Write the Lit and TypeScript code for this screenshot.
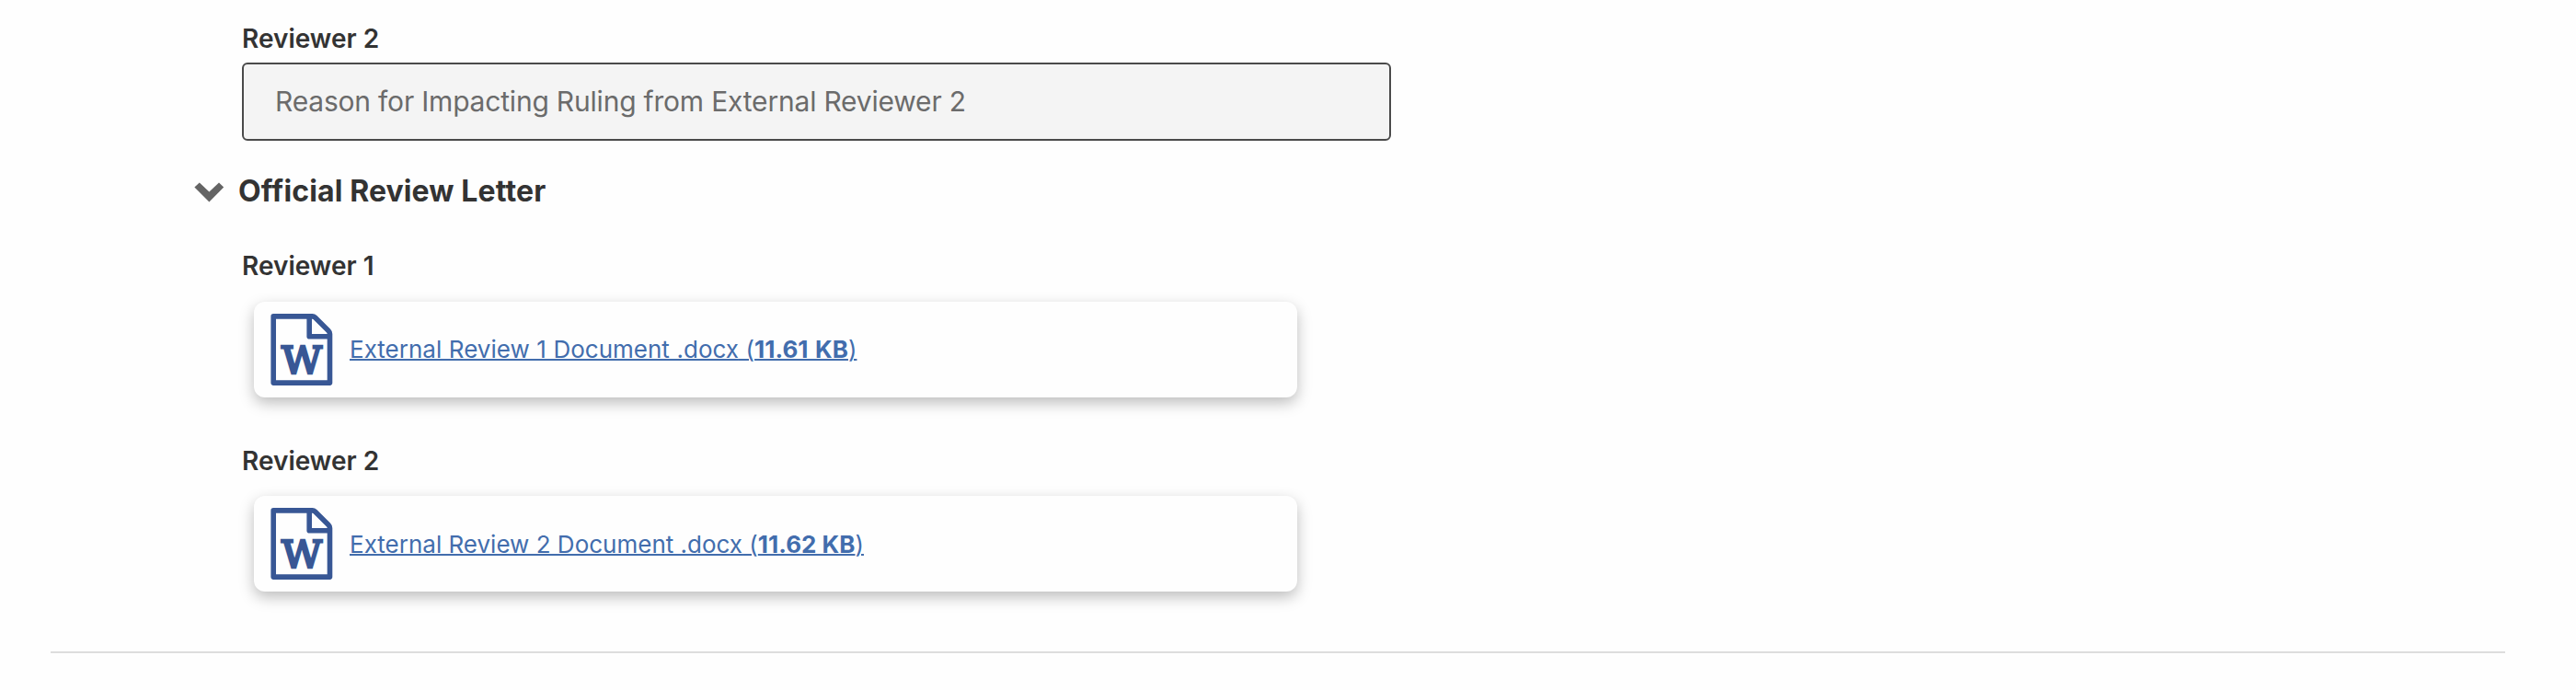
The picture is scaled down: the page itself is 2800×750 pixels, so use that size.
import { LitElement, html, css } from "lit";
import { customElement, property } from "lit/decorators.js";

@customElement("document-card")
class DocumentCard extends LitElement {
  @property() name = "";
  @property() size = "";

  static styles = css`
    :host {
      display: flex;
      align-items: center;
      box-sizing: border-box;
      width: 1134px;
      height: 104px;
      padding-left: 18px;
      gap: 18px;
      border-radius: 12px;
      background: #fefefe;
      box-shadow: 0 6px 16px rgba(0, 0, 0, 0.26);
    }
    .icon {
      flex: none;
      width: 68px;
      height: 78px;
    }
    .sheet {
      fill: none;
      stroke: #385795;
      stroke-width: 5.6;
      stroke-linejoin: round;
    }
    .mark {
      fill: #385795;
      stroke: #385795;
      stroke-width: 2.6;
      font: 400 41.6px "DejaVu Serif", serif;
    }
    .link {
      color: #426dad;
      font-size: 26px;
      line-height: 32px;
      word-spacing: var(--link-spacing, 0);
      text-decoration: underline;
      text-decoration-thickness: 2px;
      white-space: nowrap;
      padding-top: var(--link-drop, 0);
    }
    .size {
      font-weight: 700;
      word-spacing: var(--size-spacing, 0);
    }
  `;

  render() {
    return html`
      <svg class="icon" viewBox="0 0 68 78">
        <path class="sheet" d="M3.2 2.9H45.5Q47.2 2.9 48.4 4.1L63 18.5Q64.5 20 64.5 22V75.1H3.2ZM42.2 3V24.8H64" />
        <text class="mark" x="12" y="65.2" textLength="44" lengthAdjust="spacingAndGlyphs">W</text>
      </svg>
      <a class="link">${this.name} (<span class="size">${this.size}</span>)</a>
    `;
  }
}

@customElement("app-root")
class AppRoot extends LitElement {
  static styles = css`
    :host {
      display: block;
      box-sizing: border-box;
      height: 750px;
      padding: 25px 77px 0 55px;
      overflow: hidden;
      background: #fefefe;
      color: #333;
      font-family: Inter, sans-serif;
    }
    .content {
      display: flex;
      flex-direction: column;
      align-items: flex-start;
      box-sizing: border-box;
      height: 685px;
      padding-left: 208px;
      border-bottom: 2px solid #ddd;
    }
    .label {
      font-size: 28px;
      font-weight: 600;
      line-height: 34px;
    }
    .field {
      display: flex;
      align-items: center;
      box-sizing: border-box;
      width: 1249px;
      height: 85px;
      margin-top: 9px;
      padding: 0 0 1px 34px;
      border: 2px solid #4a4a4a;
      border-radius: 6px;
      background: #f4f4f4;
      color: #6b6b6b;
      font-size: 30px;
      line-height: 36px;
      letter-spacing: -0.2px;
    }
    .heading {
      display: flex;
      align-items: center;
      gap: 15px;
      height: 40px;
      margin: 35px 0 0 -52px;
      font-size: 32px;
      font-weight: 700;
      line-height: 40px;
      letter-spacing: 0.12px;
    }
    .chevron {
      width: 33px;
      height: 22px;
      margin-top: 2px;
    }
    .chevron path {
      fill: #646464;
    }
    .first {
      margin-top: 44px;
    }
    .second {
      margin-top: 52px;
    }
    .card-a {
      margin: 22px 0 0 13px;
      --link-spacing: 0.3px;
      --size-spacing: 1.4px;
    }
    .card-b {
      margin: 21px 0 0 13px;
      --link-drop: 2px;
    }
  `;

  render() {
    return html`
      <div class="content">
        <div class="label">Reviewer 2</div>
        <div class="field">Reason for Impacting Ruling from External Reviewer 2</div>
        <div class="heading">
          <svg class="chevron" viewBox="0 0 33 22">
            <path d="M0.4 5.6 5.8 0.4 16.4 10.6 27 0.4 32.2 5.6 16.4 21.4Z" />
          </svg>
          Official Review Letter
        </div>
        <div class="label first">Reviewer 1</div>
        <document-card class="card-a" name="External Review 1 Document .docx" size="11.61 KB"></document-card>
        <div class="label second">Reviewer 2</div>
        <document-card class="card-b" name="External Review 2 Document .docx" size="11.62 KB"></document-card>
      </div>
    `;
  }
}
